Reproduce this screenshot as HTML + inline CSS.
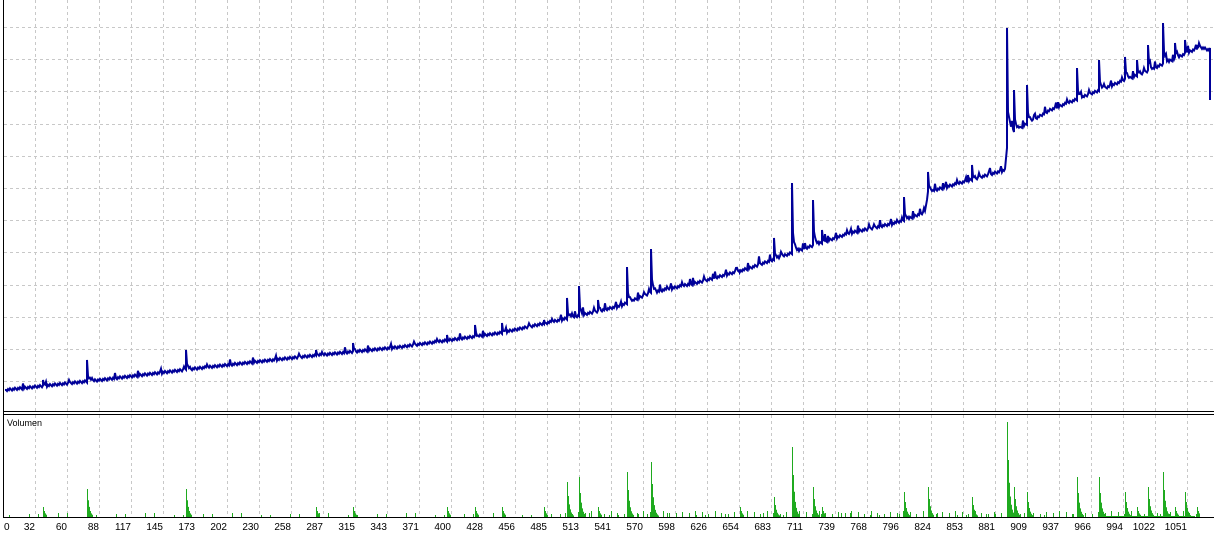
<!DOCTYPE html>
<html><head><meta charset="utf-8"><style>
html,body{margin:0;padding:0;background:#fff;width:1214px;height:536px;overflow:hidden}
svg{display:block}
text{font-family:"Liberation Sans",sans-serif;font-size:10px;fill:#000}
</style></head><body>
<svg id="s" width="1214" height="536" xmlns="http://www.w3.org/2000/svg">
<rect width="1214" height="536" fill="#fff"/>
<g id="grid" stroke="#c8c8c8" stroke-dasharray="3,3" stroke-width="1"></g>
<line x1="3.5" y1="0" x2="3.5" y2="518" stroke="#000"/>
<line x1="3" y1="411.5" x2="1214" y2="411.5" stroke="#000"/>
<line x1="3" y1="414.5" x2="1214" y2="414.5" stroke="#000"/>
<line x1="3" y1="517.5" x2="1214" y2="517.5" stroke="#000"/>
<text x="7" y="426" style="font-size:9px">Volumen</text>
<g id="vol" stroke="#1faa1f" stroke-width="1"></g>
<path id="eq" fill="none" stroke="#000099" stroke-width="2"/>
<g id="lab"></g>
</svg>
<script>
var NS="http://www.w3.org/2000/svg";
function el(p,t,a,txt){var e=document.createElementNS(NS,t);for(var k in a)e.setAttribute(k,a[k]);if(txt)e.textContent=txt;document.getElementById(p).appendChild(e);return e;}
for(var x=35;x<1214;x+=32){el("grid","line",{x1:x+.5,y1:0,x2:x+.5,y2:411});el("grid","line",{x1:x+.5,y1:415,x2:x+.5,y2:517});}
for(var y=27;y<405;y+=32.2){var yy=Math.round(y)+.5;el("grid","line",{x1:4,y1:yy,x2:1214,y2:yy});}
var labs=[0,32,60,88,117,145,173,202,230,258,287,315,343,371,400,428,456,485,513,541,570,598,626,654,683,711,739,768,796,824,853,881,909,937,966,994,1022,1051];
labs.forEach(function(v,i){var x=3+32*i;el("lab","text",{x:i==0?4:x,y:530,"text-anchor":i==0?"start":"end"},String(v));});
var K=[[5,390],[100,380],[200,368],[300,357],[400,347],[500,333],[560,320],[620,306],[650,293],[700,282],[750,268],[800,250],[850,233],[900,222],[925,212],[928,192],[960,183],[1005,170],[1008,135],[1050,110],[1100,90],[1150,70],[1200,47],[1209,50]];
function base(x){for(var i=0;i<K.length-1;i++){if(x<=K[i+1][0]){var t=(x-K[i][0])/(K[i+1][0]-K[i][0]);return K[i][1]+t*(K[i+1][1]-K[i][1]);}}return 50;}
var S=[[43,380,0],[87,360,28],[186,350,28],[316,350,0],[353,343,0],[447,335,0],[475,325,0],[502,323,0],[544,320,0],[567,298,35],[579,286,40],[598,300,0],[627,267,45],[651,249,55],[740,272,0],[774,238,20],[792,183,70],[813,200,30],[822,230,0],[904,197,25],[928,172,30],[972,165,20],[1007,28,95],[1014,90,30],[1027,85,25],[1077,68,40],[1099,60,40],[1125,57,25],[1137,60,0],[1148,45,30],[1163,23,45],[1175,43,0],[1185,40,25],[1197,45,0]];
var d="M5,"+base(5).toFixed(1);
var sp={};S.forEach(function(s){sp[s[0]]=s;});
var ext=0;
for(var x=6;x<=1209;x++){
 var b=base(x)+((x*7)%5)*0.6-1.2;
 if(sp[x]){d+=" L"+x+","+b.toFixed(1)+" L"+x+","+sp[x][1]+" L"+(x+1)+","+(b-(b-sp[x][1])*0.3).toFixed(1);ext=(b-sp[x][1])*0.15;x++;continue;}
 if(ext>1){b-=ext;ext*=0.6;}
 if(x%23==0)b-=4;
 if(x>560&&x%11==0)b-=5;
 d+=" L"+x+","+b.toFixed(1);
}
d+=" L1210,48 L1210,100";
document.getElementById("eq").setAttribute("d",d);
var vs="";
for(var x=6;x<1200;x++){var h=0;
 if((x*13)%29<2)h=2+((x*5)%3);
 S.forEach(function(s){var dx=x-s[0];if(dx>=0&&dx<10){var H=s[2]||10;h=Math.max(h,H*Math.pow(0.6,dx));}});
 if(x>560&&(x*11)%13<2)h=Math.max(h,3+(x%4));
 if(h>1.5)vs+="M"+(x+.5)+",517V"+(517-h).toFixed(1);
}
el("vol","path",{d:vs,fill:"none"});
el("vol","line",{x1:1100,y1:516.5,x2:1195,y2:516.5});
</script>
</body></html>
